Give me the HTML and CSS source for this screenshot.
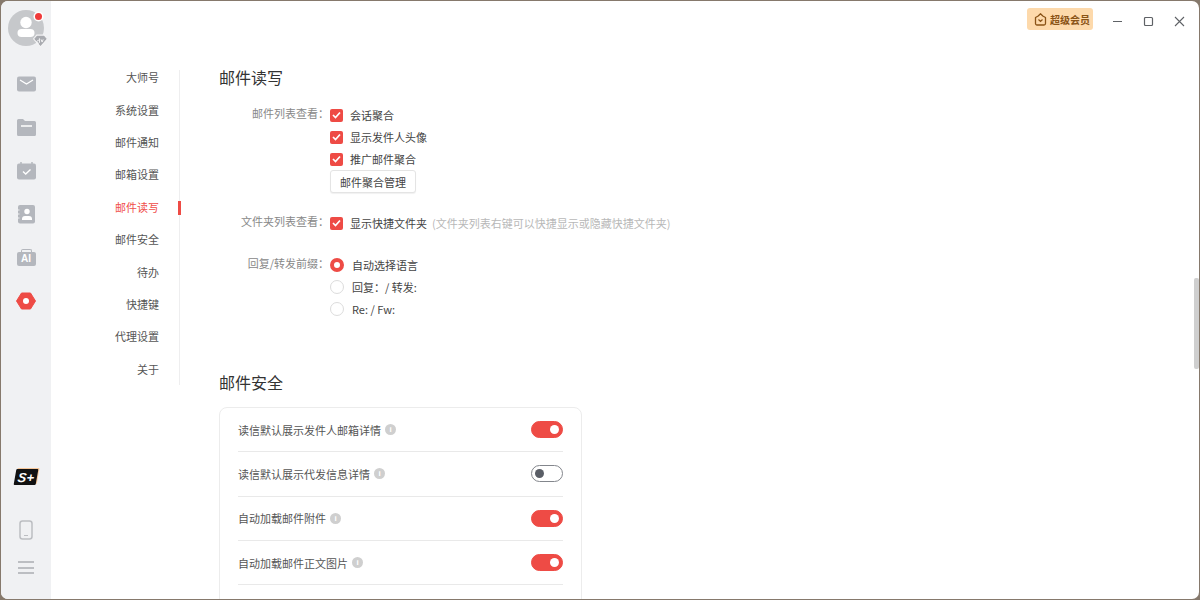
FILE: index.html
```html
<!DOCTYPE html>
<html lang="zh">
<head>
<meta charset="utf-8">
<title>设置</title>
<link rel="stylesheet" href="styles.css">
</head>
<body>
<div class="window">
  <aside class="rail">
    <div class="avatar">
      <svg width="36" height="36" viewBox="0 0 36 36"><circle cx="18" cy="18" r="18" fill="#c6c8cb"/><circle cx="18" cy="12.500" r="5.700" fill="#fff"/><path d="M9.500 23a4 4 0 0 1 4-4h9a4 4 0 0 1 4 4v0a4 4 0 0 1-4 4h-9a4 4 0 0 1-4-4z" fill="#fff"/></svg>
      <span class="dot"></span>
      <svg class="vip" width="15" height="14" viewBox="0 0 14 13"><path d="M3.500 1h7L13.500 4.500 7 12 .5 4.500z" fill="#a9abb0" stroke="#f4f4f5"/><path d="M6 4v4M6 6.500a1.300 1.300 0 1 0 0 1.500M7.500 5l1 2.500 1-2.500" fill="none" stroke="#fff" stroke-width=".8"/></svg>
    </div>
    <nav class="rail-icons">
      <svg width="19" height="18" viewBox="0 0 19 18"><rect y="1.500" width="19" height="15" rx="2" fill="#b4b7bd"/><path d="M3 5l6.500 4 6.500-4" fill="none" stroke="#fff" stroke-width="1.300"/></svg>
      <svg width="19" height="18" viewBox="0 0 19 18"><path d="M0 2.500a1.500 1.500 0 0 1 1.500-1.500H6L8 3h9.500A1.500 1.500 0 0 1 19 4.500v12a1.500 1.500 0 0 1-1.500 1.500h-16A1.500 1.500 0 0 1 0 16.500z" fill="#b4b7bd"/><path d="M4 8h11" stroke="#fff" stroke-width="1.300"/></svg>
      <svg width="19" height="18" viewBox="0 0 19 18"><path d="M4 0v3M15 0v3" stroke="#b4b7bd" stroke-width="1.500"/><rect y="1.500" width="19" height="16" rx="2" fill="#b4b7bd"/><path d="M6 9.500l2.700 2.500L13.500 7.500" fill="none" stroke="#fff" stroke-width="1.400"/></svg>
      <svg width="18" height="19" viewBox="0 0 18 19"><rect x="1" width="17" height="18.500" rx="2" fill="#b4b7bd"/><circle cx="10" cy="6.500" r="2.700" fill="#fff"/><path d="M5 14a3 3 0 0 1 3-3h4a3 3 0 0 1 3 3v1H5z" fill="#fff"/><path d="M0 5h2.500M0 9h2.500M0 13h2.500" stroke="#f0f1f3" stroke-width="1"/></svg>
      <div class="ai-icon"><span>AI</span></div>
      <svg width="20" height="18" viewBox="0 0 20 18"><path d="M5.500 1h9L19.500 9l-5 8h-9L.500 9z" fill="#ee4b45" stroke="#ee4b45" stroke-linejoin="round"/><circle cx="10" cy="9" r="3" fill="#fff"/></svg>
    </nav>
    <div class="rail-bottom">
      <div class="splus"><span>S+</span></div>
      <svg class="phone" width="14" height="20" viewBox="0 0 14 20"><rect x="1" y="1" width="12" height="18" rx="2.500" fill="none" stroke="#bcbec2" stroke-width="1.500"/><path d="M5 15.500h4" stroke="#bcbec2" stroke-width="1.200"/></svg>
      <div class="menu"><i></i><i></i><i></i></div>
    </div>
  </aside>

  <div class="page">
    <header class="titlebar">
      <div class="vip-btn">
        <svg width="13" height="13" viewBox="0 0 13 13"><path d="M1.500 4.500L4.200 3 6.500 .8 8.800 3l2.700 1.500v6a1.500 1.500 0 0 1-1.500 1.500H3a1.500 1.500 0 0 1-1.500-1.500z" fill="none" stroke="#8a5316" stroke-width="1.300" stroke-linejoin="round"/><path d="M4.500 6.500L6.500 8.500l2-2" fill="none" stroke="#8a5316" stroke-width="1.200"/></svg>
        <span>超级会员</span>
      </div>
      <div class="win-btns">
        <svg width="11" height="11" viewBox="0 0 11 11"><path d="M1 5.500h9" stroke="#5f6266" stroke-width="1.200"/></svg>
        <svg width="11" height="11" viewBox="0 0 11 11"><rect x="1.500" y="1.500" width="8" height="8" rx="1" fill="none" stroke="#5f6266" stroke-width="1.200"/></svg>
        <svg width="11" height="11" viewBox="0 0 11 11"><path d="M1 1l9 9M10 1l-9 9" stroke="#5f6266" stroke-width="1.100"/></svg>
      </div>
    </header>

    <div class="body">
      <nav class="side-nav">
        <a>大师号</a>
        <a>系统设置</a>
        <a>邮件通知</a>
        <a>邮箱设置</a>
        <a class="active">邮件读写</a>
        <a>邮件安全</a>
        <a>待办</a>
        <a>快捷键</a>
        <a>代理设置</a>
        <a>关于</a>
      </nav>

      <main class="content">
        <h2 class="title">邮件读写</h2>

        <section class="form-row first">
          <div class="label">邮件列表查看：</div>
          <div class="controls">
            <label class="opt"><span class="check"><svg width="9" height="8" viewBox="0 0 9 8"><path d="M1 4l2.500 2.500L8 1.500" fill="none" stroke="#fff" stroke-width="1.700"/></svg></span>会话聚合</label>
            <label class="opt"><span class="check"><svg width="9" height="8" viewBox="0 0 9 8"><path d="M1 4l2.500 2.500L8 1.500" fill="none" stroke="#fff" stroke-width="1.700"/></svg></span>显示发件人头像</label>
            <label class="opt"><span class="check"><svg width="9" height="8" viewBox="0 0 9 8"><path d="M1 4l2.500 2.500L8 1.500" fill="none" stroke="#fff" stroke-width="1.700"/></svg></span>推广邮件聚合</label>
            <button class="btn">邮件聚合管理</button>
          </div>
        </section>

        <section class="form-row folder">
          <div class="label">文件夹列表查看：</div>
          <div class="controls">
            <label class="opt"><span class="check"><svg width="9" height="8" viewBox="0 0 9 8"><path d="M1 4l2.500 2.500L8 1.500" fill="none" stroke="#fff" stroke-width="1.700"/></svg></span>显示快捷文件夹<span class="hint">(文件夹列表右键可以快捷显示或隐藏快捷文件夹)</span></label>
          </div>
        </section>

        <section class="form-row prefix">
          <div class="label">回复/转发前缀：</div>
          <div class="controls">
            <label class="opt"><span class="radio on"></span>自动选择语言</label>
            <label class="opt"><span class="radio"></span>回复：/ 转发:</label>
            <label class="opt"><span class="radio"></span>Re: / Fw:</label>
          </div>
        </section>

        <h2 class="title second">邮件安全</h2>

        <section class="card">
          <div class="item"><span class="item-text">读信默认展示发件人邮箱详情</span><span class="info">i</span><span class="switch on"></span></div>
          <div class="item"><span class="item-text">读信默认展示代发信息详情</span><span class="info">i</span><span class="switch"></span></div>
          <div class="item"><span class="item-text">自动加载邮件附件</span><span class="info">i</span><span class="switch on"></span></div>
          <div class="item"><span class="item-text">自动加载邮件正文图片</span><span class="info">i</span><span class="switch on"></span></div>
        </section>
      </main>
      <div class="scrollbar"><div class="thumb"></div></div>
    </div>
  </div>
</div>
</body>
</html>
```
FILE: styles.css
```css
* { box-sizing: border-box; }
html, body { margin: 0; height: 600px; overflow: hidden; }
body {
  background: #86796c;
  padding: 1px;
  font-family: "Noto Sans CJK SC", "Liberation Sans", sans-serif;
  font-size: 11px;
  color: #555;
}
.window {
  display: flex;
  height: 598px;
  background: #fff;
  border-radius: 7px;
  overflow: hidden;
}
.rail {
  width: 50px;
  flex: none;
  background: #f0f1f3;
  display: flex;
  flex-direction: column;
  align-items: center;
  padding: 9px 0 0 0;
}
.avatar { position: relative; width: 36px; height: 36px; }
.avatar > svg:first-child { display: block; }
.dot {
  position: absolute; top: 3px; right: 2px;
  width: 7px; height: 7px;
  border-radius: 50%;
  background: #f03a3a;
  box-shadow: 0 0 0 1.500px #fff;
}
.vip { position: absolute; right: -4px; bottom: -2px; }
.rail-icons {
  margin-top: 16px;
  display: grid;
  grid-auto-rows: 43.500px;
  justify-items: center;
  align-items: center;
}
.rail-icons svg { display: block; }
.ai-icon {
  width: 19px; height: 14px;
  margin-top: 2px;
  background: #b4b7bd;
  border-radius: 2px;
  display: flex;
  align-items: center;
  justify-content: center;
  position: relative;
}
.ai-icon::before {
  content: "";
  position: absolute;
  top: -3px; left: 4px; right: 4px;
  height: 4px;
  border: 1.200px solid #b4b7bd;
  border-bottom: 0;
  border-radius: 2px 2px 0 0;
}
.ai-icon span { color: #fff; font: 700 10px/1 "Liberation Sans", sans-serif; }
.rail-bottom {
  margin-top: auto;
  display: flex;
  flex-direction: column;
  align-items: center;
  padding-bottom: 25px;
}
.splus {
  width: 22px; height: 16px;
  background: #111;
  border-radius: 1px;
  box-shadow: 1px -1px 0 #f6c79a;
  transform: skewX(-10deg);
  display: flex;
  align-items: center;
  justify-content: center;
}
.splus span { color: #fff; font: italic 700 13px/1 "Liberation Sans", sans-serif; }
.phone { display: block; margin-top: 35px; }
.menu { margin-top: 21px; width: 16px; display: flex; flex-direction: column; gap: 3.500px; }
.menu i { display: block; height: 2px; background: #bcbec2; }

.page { flex: 1; display: flex; flex-direction: column; min-width: 0; position: relative; }
.titlebar {
  position: absolute;
  top: 7px; right: 0; left: 0;
  display: flex;
  justify-content: flex-end;
  align-items: flex-start;
  padding-right: 14px;
}
.vip-btn {
  display: flex;
  align-items: center;
  gap: 3px;
  height: 22px;
  padding: 0 3px 0 7px;
  background: #fdd9ab;
  border-radius: 3px;
  color: #8a5316;
  font-size: 10px;
  font-weight: 700;
}
.vip-btn svg { display: block; }
.win-btns { display: flex; gap: 20px; margin-left: 19px; margin-top: 8px; }
.win-btns svg { display: block; }

.body { display: flex; height: 100%; position: relative; }
.side-nav {
  width: 129px;
  flex: none;
  margin-top: 69.300px;
  height: 315px;
  border-right: 1px solid #eeeeef;
  display: flex;
  flex-direction: column;
  align-items: flex-end;
  padding: 0 20px 0 0;
}
.side-nav a { flex: none; height: 32.400px; line-height: 14px; position: relative; color: #555; }
.side-nav a:last-child { height: 23px; }
.side-nav a.active { color: #f04d4a; }
.side-nav a.active::after {
  content: "";
  position: absolute;
  right: -22px; top: 1px;
  width: 3px; height: 14px;
  background: #ee4b45;
}
.content { flex: 1; padding: 64px 0 0 39px; min-width: 0; }
.title { margin: 0; font-size: 16px; font-weight: 400; line-height: 24px; color: #333; height: 24px; }
.title.second { margin-top: 50px; }
.form-row { display: flex; }
.form-row.first { margin-top: 15px; }
.form-row.folder { margin-top: 19px; }
.form-row.prefix { margin-top: 20px; }
.label { width: 110px; flex: none; text-align: right; color: #888; line-height: 21.700px; white-space: nowrap; margin-top: -1px; }
.controls { margin-left: 1px; display: flex; flex-direction: column; align-items: flex-start; }
.opt { display: flex; align-items: center; height: 22px; white-space: nowrap; color: #444; }
.check {
  width: 13px; height: 13px;
  background: #ee4b45;
  border-radius: 2px;
  display: flex;
  align-items: center;
  justify-content: center;
  margin-right: 7px;
}
.check svg { display: block; }
.hint { color: #b8b8b8; margin-left: 5px; }
.radio {
  width: 14px; height: 14px;
  border-radius: 50%;
  border: 1px solid #dcdcdc;
  margin-right: 8px;
  background: #fff;
}
.radio.on { border: 4px solid #ee4b45; }
.btn {
  width: 86px; height: 23px;
  padding: 0;
  margin-top: 0;
  background: #fff;
  border: 1px solid #e4e4e4;
  border-radius: 3px;
  font: inherit;
  color: #444;
  box-shadow: 0 1px 1px rgba(0,0,0,.06);
}
.card {
  margin-top: 13px;
  width: 363px;
  height: 220px;
  border: 1px solid #ececec;
  border-radius: 8px;
  padding: 0 18px;
}
.item {
  height: 44.300px;
  display: flex;
  align-items: center;
  border-bottom: 1px solid #e9e9e9;
  color: #555;
}
.info {
  width: 11px; height: 11px;
  margin-left: 4px;
  border-radius: 50%;
  background: #cfcfcf;
  color: #fff;
  font: 700 8px/11px "Liberation Sans", sans-serif;
  text-align: center;
}
.switch {
  margin-left: auto;
  width: 32px; height: 17px;
  border-radius: 9px;
  border: 1px solid #83868c;
  background: #fff;
  position: relative;
}
.switch::after {
  content: "";
  position: absolute;
  left: 3px; top: 3px;
  width: 9px; height: 9px;
  border-radius: 50%;
  background: #5a5e66;
}
.switch.on { background: #ee4b45; border-color: #ee4b45; }
.switch.on::after { left: auto; right: 3px; background: #fff; }
.scrollbar { position: absolute; right: 0; top: 0; bottom: 0; width: 5px; }
.thumb { position: absolute; top: 277px; height: 91px; width: 100%; background: #cfcfcf; border-radius: 2px; }
```
